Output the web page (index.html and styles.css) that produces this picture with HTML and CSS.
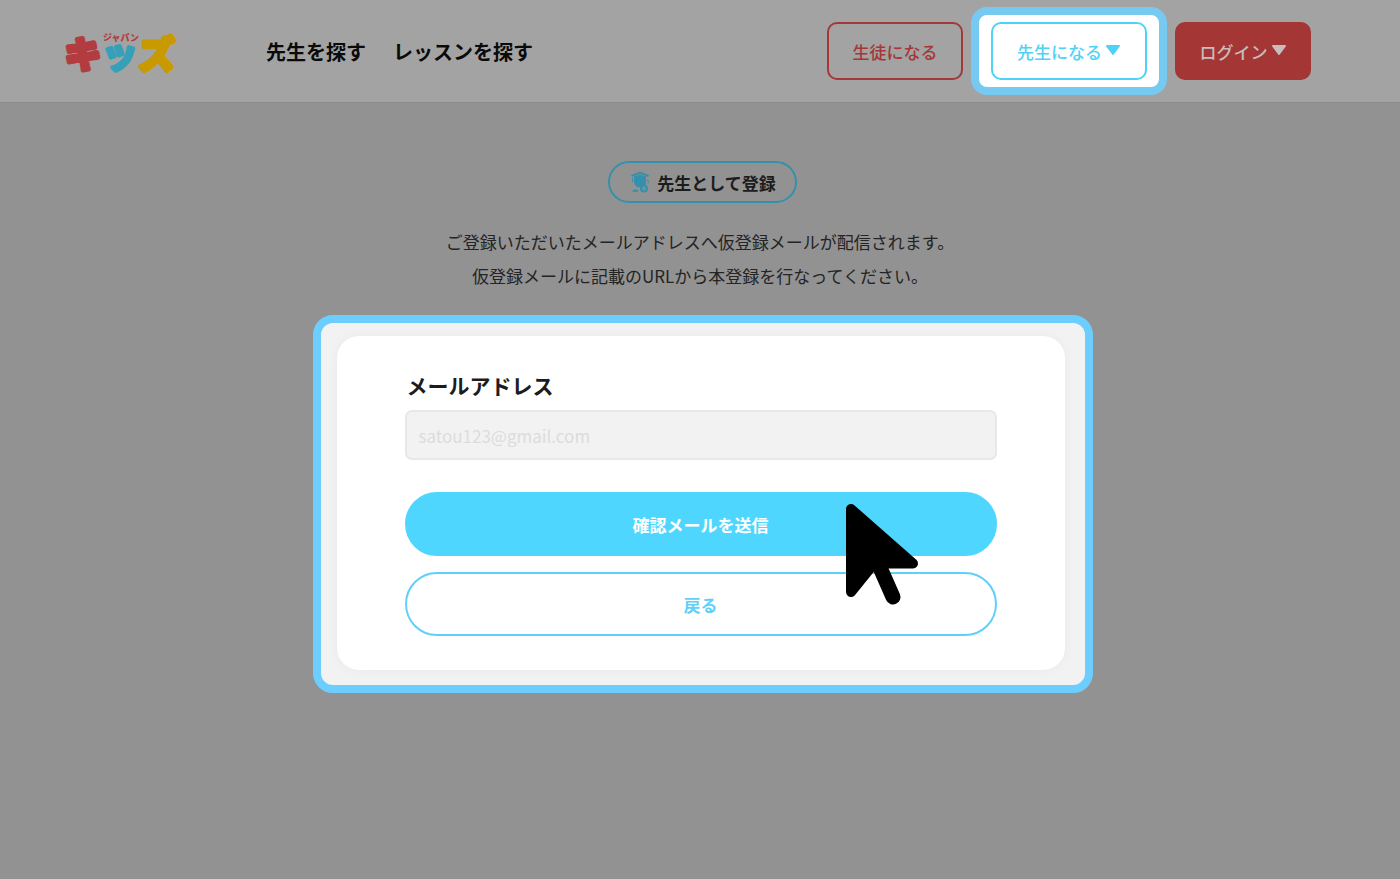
FILE: index.html
```html
<!DOCTYPE html>
<html lang="ja">
<head>
<meta charset="UTF-8">
<meta name="viewport" content="width=device-width, initial-scale=1.0">
<title>先生として登録</title>
<link rel="stylesheet" href="styles.css">
</head>
<body>
<header class="header">
    <a class="logo" href="#">
        <svg width="120" height="54" viewBox="0 0 120 54">
            <g class="logo-big">
                <text class="red" x="3" y="44">キ</text>
                <text class="blue" x="43" y="45">ツ</text>
                <text class="yellow" x="77" y="44">ズ</text>
            </g>
            <text class="logo-small" x="41" y="17">ジャパン</text>
        </svg>
    </a>
    <nav class="nav">
        <a href="#">先生を探す</a>
        <a href="#">レッスンを探す</a>
    </nav>
    <div class="actions">
        <button class="btn btn-student" type="button">生徒になる</button>
        <div class="spotlight spotlight-small">
            <button class="btn btn-teacher" type="button">先生になる<svg class="caret" width="16" height="12" viewBox="0 0 16 12"><path d="M2 1h12L8 9z"/></svg></button>
        </div>
        <button class="btn btn-login" type="button">ログイン<svg class="caret" width="16" height="12" viewBox="0 0 16 12"><path d="M2 1h12L8 9z"/></svg></button>
    </div>
</header>

<main class="main">
    <h1 class="title">
        <svg width="20" height="22" viewBox="0 0 20 22">
            <path class="line" d="M1.500 5L10 1.500L18.500 5"/>
            <path d="M4 5.500L10 3.500L16 5.500V11a6 5.500 0 0 1-12 0z"/>
            <path class="line thin" d="M2.500 7v4M17.500 8.500q1.500 2 .5 4"/>
            <path class="line" d="M3 20.500q2-2 5 0"/>
            <circle class="line" cx="14" cy="17.500" r="3"/>
            <path class="line thin" d="M12.500 17.500l1 1 2-2"/>
        </svg>
        先生として登録
    </h1>
    <p class="lead">ご登録いただいたメールアドレスへ仮登録メールが配信されます。<br>仮登録メールに記載のURLから本登録を行なってください。</p>

    <div class="spotlight spotlight-form">
        <form class="card">
            <label for="email">メールアドレス</label>
            <input type="email" id="email" placeholder="satou123@gmail.com">
            <button class="pill pill-send" type="button">確認メールを送信</button>
            <button class="pill pill-back" type="button">戻る</button>
        </form>
        <svg class="cursor" width="74" height="104" viewBox="0 0 74 104">
            <path d="M5 6L67 60.500H28L5 89z" stroke-width="10"/>
            <path d="M32 60L47 94" stroke-width="15"/>
        </svg>
    </div>
</main>
</body>
</html>
```

FILE: styles.css
```css
* {
    box-sizing: border-box;
}
body {
    margin: 0;
    min-height: 100vh;
    background: #929292;
    color: #1c1c1c;
    font-family: "Noto Sans CJK JP", sans-serif;
}
button, input {
    font-family: inherit;
}

/* header */
.header {
    display: flex;
    align-items: center;
    padding: 7px 89px 7px 62px;
    background: #a3a3a3;
    border-bottom: 1px solid #8c8c8c;
}
.logo svg {
    display: block;
}
.logo-big {
    font-size: 36px;
    font-weight: 700;
    stroke-width: 5px;
    stroke-linejoin: round;
}
.red {
    fill: #b23c40;
    stroke: #b23c40;
}
.blue {
    fill: #35a0b8;
    stroke: #35a0b8;
    font-size: 30px;
    stroke-width: 4px;
}
.yellow {
    fill: #c99a00;
    stroke: #c99a00;
}
.logo-small {
    fill: #b23c40;
    font-size: 9px;
    font-weight: 900;
}
.nav {
    display: flex;
    gap: 27px;
    margin-left: 84px;
}
.nav a {
    color: #0a0a0a;
    font-size: 20px;
    font-weight: 700;
    text-decoration: none;
}
.actions {
    display: flex;
    align-items: center;
    gap: 8px;
    margin-left: auto;
}
.btn {
    display: flex;
    align-items: center;
    justify-content: center;
    gap: 3px;
    height: 58px;
    padding: 0 22px;
    border: 2px solid;
    border-radius: 10px;
    background: none;
    font-size: 17px;
    font-weight: 500;
}
.caret {
    fill: currentColor;
    stroke: currentColor;
    stroke-width: 2px;
    stroke-linejoin: round;
}
.btn-student {
    min-width: 136px;
    color: #a43838;
}
.btn-teacher {
    min-width: 156px;
    color: #4fd2f8;
}
.btn-login {
    min-width: 136px;
    border-color: #a43636;
    background: #a43636;
    color: #c9bcbc;
}

/* bright frames round the active parts */
.spotlight {
    border: 8px solid #76caf2;
    border-radius: 16px;
    background: white;
}
.spotlight-small {
    padding: 7px 12px;
}
.spotlight-form {
    position: relative;
    width: 100%;
    max-width: 780px;
    padding: 13px 20px 15px 16px;
    border-color: #6ccdff;
    border-radius: 20px;
    background: #f2f2f2;
}

/* registration */
.main {
    display: flex;
    flex-direction: column;
    align-items: center;
    padding: 58px 0 40px 5px;
}
.title {
    display: flex;
    align-items: center;
    gap: 7px;
    height: 42px;
    margin: 0;
    padding: 0 19px 0 20px;
    border: 2px solid #3490ac;
    border-radius: 21px;
    font-size: 17px;
    font-weight: 700;
}
.title svg {
    fill: #3490ac;
}
.title .line {
    fill: none;
    stroke: #3490ac;
    stroke-width: 2px;
}
.title .thin {
    stroke-width: 1px;
}
.lead {
    margin: 22px 0;
    padding-right: 5px;
    color: #242424;
    font-size: 17px;
    line-height: 34px;
    text-align: center;
}
.card {
    display: flex;
    flex-direction: column;
    padding: 34px 68px;
    border-radius: 22px;
    background: white;
    box-shadow: 0 0 12px rgba(0, 0, 0, 0.04);
}
.card label {
    padding-left: 2px;
    font-size: 21px;
    font-weight: 700;
    line-height: 30px;
}
.card input {
    height: 50px;
    margin: 10px 0 32px;
    padding: 0 12px;
    border: 2px solid #e8e8e8;
    border-radius: 7px;
    background: #f2f2f2;
    font-size: 17px;
}
.card input::placeholder {
    color: #dcdcdc;
}
.pill {
    height: 64px;
    border: 2px solid #4fd6fe;
    border-radius: 32px;
    font-size: 17px;
    font-weight: 700;
}
.pill-send {
    background: #4fd6fe;
    color: white;
}
.pill-back {
    margin-top: 16px;
    border-color: #5fd0f7;
    background: white;
    color: #5fd0f7;
}
.cursor {
    position: absolute;
    top: 180px;
    left: 525px;
    fill: black;
    stroke: black;
    stroke-linejoin: round;
    stroke-linecap: round;
}
```
